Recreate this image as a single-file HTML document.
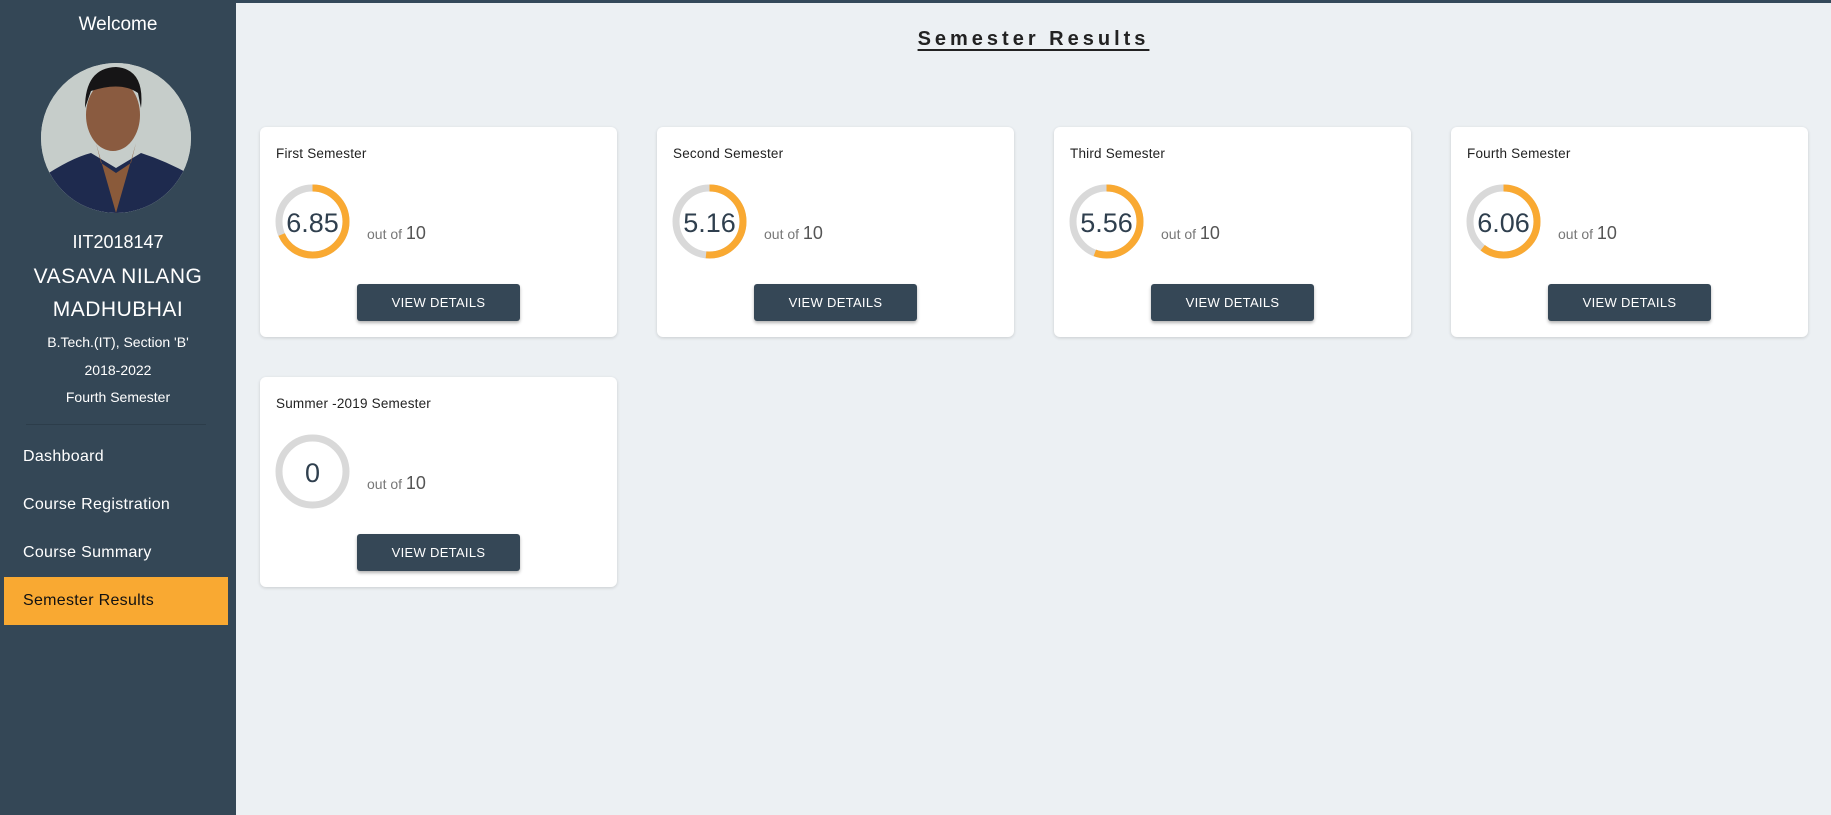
<!DOCTYPE html>
<html><head><meta charset="utf-8"><style>
*{margin:0;padding:0;box-sizing:border-box}
body{width:1831px;height:815px;overflow:hidden;background:#ecf0f3;font-family:"Liberation Sans",sans-serif;position:relative}
.top{position:absolute;left:0;top:0;width:1831px;height:3px;background:#34495a}
.side{position:absolute;left:0;top:0;width:236px;height:815px;background:#344756;color:#fff;text-align:center}
.side .t{position:absolute;left:0;width:236px;text-align:center}
.photo{position:absolute;left:41px;top:63px;width:150px;height:150px;border-radius:50%;overflow:hidden;background:#c9d0cc}
.nav{position:absolute;left:23px;font-size:16px;color:#fff;letter-spacing:.3px}
.active{position:absolute;left:4px;top:577px;width:224px;height:48px;background:#f9a932}
.card{position:absolute;width:357px;height:210px;background:#fff;border-radius:6px;box-shadow:0 1px 3px rgba(0,0,0,.15)}
.card .h{position:absolute;left:16px;top:19px;font-size:13.5px;color:#222;letter-spacing:.2px}
.card svg{position:absolute;left:15px;top:57px}
.card .v{position:absolute;left:15px;top:59px;width:75px;height:75px;line-height:75px;text-align:center;font-size:27px;color:#2f3f4e}
.card .o{position:absolute;left:107px;top:96px;font-size:14px;color:#777}
.card .o b{font-weight:normal;font-size:18px;color:#555}
.card .btn{position:absolute;left:97px;top:157px;width:163px;height:37px;background:#354756;color:#fff;font-size:13px;line-height:37px;text-align:center;border-radius:3px;box-shadow:0 2px 3px rgba(0,0,0,.3);letter-spacing:.3px}
h1{position:absolute;left:917px;top:28px;width:233px;text-align:center;font-size:20px;font-weight:bold;letter-spacing:4px;color:#222;text-decoration:underline;text-underline-offset:4px;white-space:nowrap}
</style></head><body>
<div class="top"></div>
<div class="side">
<div class="t" style="top:14px;font-size:19px">Welcome</div>
<div class="photo">
<svg width="150" height="150" viewBox="0 0 150 150">
<rect width="150" height="150" fill="#c6cdca"/>
<path d="M0 150 L0 115 Q30 95 50 90 L75 105 L100 90 Q125 98 150 112 L150 150Z" fill="#1e2a4e"/>
<path d="M55 80 L75 150 L95 80 L90 100 L75 110 L60 100Z" fill="#8a5a3a"/>
<ellipse cx="72" cy="52" rx="27" ry="36" fill="#8a5b40"/>
<path d="M44 45 Q44 5 75 4 Q104 6 100 45 L97 30 Q80 18 50 28Z" fill="#161516"/>
</svg></div>
<div class="t" style="top:232px;font-size:18px">IIT2018147</div>
<div class="t" style="top:265px;font-size:21px;letter-spacing:.5px">VASAVA NILANG</div>
<div class="t" style="top:298px;font-size:21px;letter-spacing:.5px">MADHUBHAI</div>
<div class="t" style="top:334px;font-size:14px">B.Tech.(IT), Section 'B'</div>
<div class="t" style="top:362px;font-size:14px">2018-2022</div>
<div class="t" style="top:389px;font-size:14px">Fourth Semester</div>
<div style="position:absolute;left:26px;top:424px;width:180px;height:1px;background:#2c3d4a"></div>
<div class="nav" style="top:448px">Dashboard</div>
<div class="nav" style="top:496px">Course Registration</div>
<div class="nav" style="top:544px">Course Summary</div>
<div class="active"></div>
<div class="nav" style="top:592px;color:#111">Semester Results</div>
</div>
<h1>Semester Results</h1>

<div class="card" style="left:260px;top:127px"><div class="h">First Semester</div>
<svg width="75" height="75"><circle cx="37.5" cy="37.5" r="33.5" fill="none" stroke="#d9d9d9" stroke-width="7"/><circle cx="37.5" cy="37.5" r="33.5" fill="none" stroke="#f9a932" stroke-width="7" stroke-dasharray="144.2 300" transform="rotate(-90 37.5 37.5)"/></svg>
<div class="v">6.85</div><div class="o">out of <b>10</b></div><div class="btn">VIEW DETAILS</div></div>

<div class="card" style="left:657px;top:127px"><div class="h">Second Semester</div>
<svg width="75" height="75"><circle cx="37.5" cy="37.5" r="33.5" fill="none" stroke="#d9d9d9" stroke-width="7"/><circle cx="37.5" cy="37.5" r="33.5" fill="none" stroke="#f9a932" stroke-width="7" stroke-dasharray="108.6 300" transform="rotate(-90 37.5 37.5)"/></svg>
<div class="v">5.16</div><div class="o">out of <b>10</b></div><div class="btn">VIEW DETAILS</div></div>

<div class="card" style="left:1054px;top:127px"><div class="h">Third Semester</div>
<svg width="75" height="75"><circle cx="37.5" cy="37.5" r="33.5" fill="none" stroke="#d9d9d9" stroke-width="7"/><circle cx="37.5" cy="37.5" r="33.5" fill="none" stroke="#f9a932" stroke-width="7" stroke-dasharray="117 300" transform="rotate(-90 37.5 37.5)"/></svg>
<div class="v">5.56</div><div class="o">out of <b>10</b></div><div class="btn">VIEW DETAILS</div></div>

<div class="card" style="left:1451px;top:127px"><div class="h">Fourth Semester</div>
<svg width="75" height="75"><circle cx="37.5" cy="37.5" r="33.5" fill="none" stroke="#d9d9d9" stroke-width="7"/><circle cx="37.5" cy="37.5" r="33.5" fill="none" stroke="#f9a932" stroke-width="7" stroke-dasharray="127.5 300" transform="rotate(-90 37.5 37.5)"/></svg>
<div class="v">6.06</div><div class="o">out of <b>10</b></div><div class="btn">VIEW DETAILS</div></div>

<div class="card" style="left:260px;top:377px"><div class="h">Summer -2019 Semester</div>
<svg width="75" height="75"><circle cx="37.5" cy="37.5" r="33.5" fill="none" stroke="#d9d9d9" stroke-width="7"/></svg>
<div class="v">0</div><div class="o">out of <b>10</b></div><div class="btn">VIEW DETAILS</div></div>
</body></html>
